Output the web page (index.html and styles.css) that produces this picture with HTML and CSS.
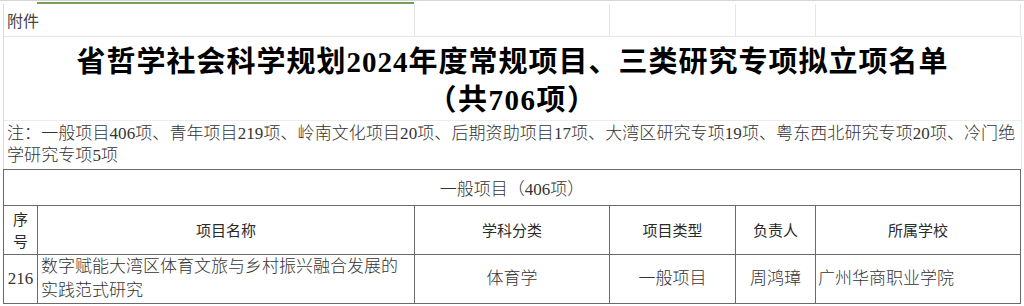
FILE: index.html
```html
<!DOCTYPE html>
<html lang="zh-CN">
<head>
<meta charset="utf-8">
<title>省哲学社会科学规划2024年度常规项目、三类研究专项拟立项名单</title>
<link rel="stylesheet" href="styles.css">
</head>
<body>
<div class="topbar"><div class="sel"></div></div>
<div class="sheet">
  <div class="attach">
    <div class="gcell span2">附件</div>
    <div class="gcell"></div>
    <div class="gcell"></div>
    <div class="gcell"></div>
    <div class="gcell"></div>
  </div>
  <div class="title">
    <div class="t1">省哲学社会科学规划2024年度常规项目、三类研究专项拟立项名单</div>
    <div class="t2">（共706项）</div>
  </div>
  <div class="note">注：一般项目406项、青年项目219项、岭南文化项目20项、后期资助项目17项、大湾区研究专项19项、粤东西北研究专项20项、冷门绝<br>学研究专项5项</div>
  <div class="table">
    <div class="cell group">一般项目（406项）</div>
    <div class="cell head seq">序<br>号</div>
    <div class="cell head">项目名称</div>
    <div class="cell head">学科分类</div>
    <div class="cell head">项目类型</div>
    <div class="cell head">负责人</div>
    <div class="cell head">所属学校</div>
    <div class="cell data">216</div>
    <div class="cell data left name">数字赋能大湾区体育文旅与乡村振兴融合发展的<br>实践范式研究</div>
    <div class="cell data">体育学</div>
    <div class="cell data">一般项目</div>
    <div class="cell data">周鸿璋</div>
    <div class="cell data left school">广州华商职业学院</div>
  </div>
</div>
</body>
</html>
```

FILE: styles.css
```css
* { box-sizing: border-box; }
html, body { margin: 0; padding: 0; background: #fff; }
body { width: 1024px; height: 306px; overflow: hidden; }

.topbar {
  height: 4px;
  border-top: 1px solid #d6d6d6;
  display: flex;
}
.topbar .sel {
  margin-left: 37px;
  width: 377px;
  height: 2px;
  margin-top: 1px;
  background: #76a058;
}

.sheet {
  margin-left: 3px;
  width: 1019px;
}

.attach {
  display: grid;
  grid-template-columns: 411px 195px 126px 80px 205px;
  height: 33px;
  border-left: 1px solid #d9d9d9;
  border-bottom: 1px solid #e6e6e6;
}
.gcell {
  border-right: 1px solid #e6e6e6;
}
.gcell.span2 {
  padding-left: 3px;
  font-family: "Noto Sans CJK SC", sans-serif;
  font-size: 16px;
  line-height: 32px;
  color: #444;
}

.title {
  height: 83px;
  padding-top: 6px;
  border-left: 1px solid #d9d9d9;
  border-right: 1px solid #e6e6e6;
  text-align: center;
  font-family: "Liberation Serif", "Noto Sans CJK SC", serif;
  font-weight: 700;
  font-size: 29px;
  line-height: 38px;
  letter-spacing: 1px;
  color: #000;
}
.title .t2 { letter-spacing: 1.5px; }

.note {
  height: 49px;
  padding: 2px 0 0 3px;
  border-top: 1px solid #ececec;
  border-left: 1px solid #d9d9d9;
  border-right: 1px solid #e6e6e6;
  font-family: "Liberation Serif", "Noto Sans CJK SC", serif;
  font-weight: 300;
  font-size: 17px;
  line-height: 22px;
  letter-spacing: 0.08px;
  color: #333;
  white-space: nowrap;
}

.table {
  display: grid;
  grid-template-columns: 34px 377px 195px 126px 80px 205px;
  grid-template-rows: 36px 49px 49px;
  width: 1018px;
  border-top: 1px solid #6a6a6a;
  border-left: 1px solid #6a6a6a;
}
.cell {
  border-right: 1px solid #6a6a6a;
  border-bottom: 1px solid #6a6a6a;
  display: flex;
  align-items: center;
  justify-content: center;
  text-align: center;
  color: #333;
}
.group {
  grid-column: 1 / -1;
  font-family: "Liberation Serif", "Noto Sans CJK SC", serif;
  font-weight: 300;
  font-size: 17px;
}
.head {
  font-family: "Noto Sans CJK SC", sans-serif;
  font-size: 15px;
  line-height: 22px;
  color: #2a2a2a;
}
.data {
  font-family: "Liberation Serif", "Noto Sans CJK SC", serif;
  font-weight: 300;
  font-size: 17px;
  line-height: 24px;
}
.left {
  justify-content: flex-start;
  text-align: left;
}
.name { padding-left: 3px; }
.school { padding-left: 2px; }
```
